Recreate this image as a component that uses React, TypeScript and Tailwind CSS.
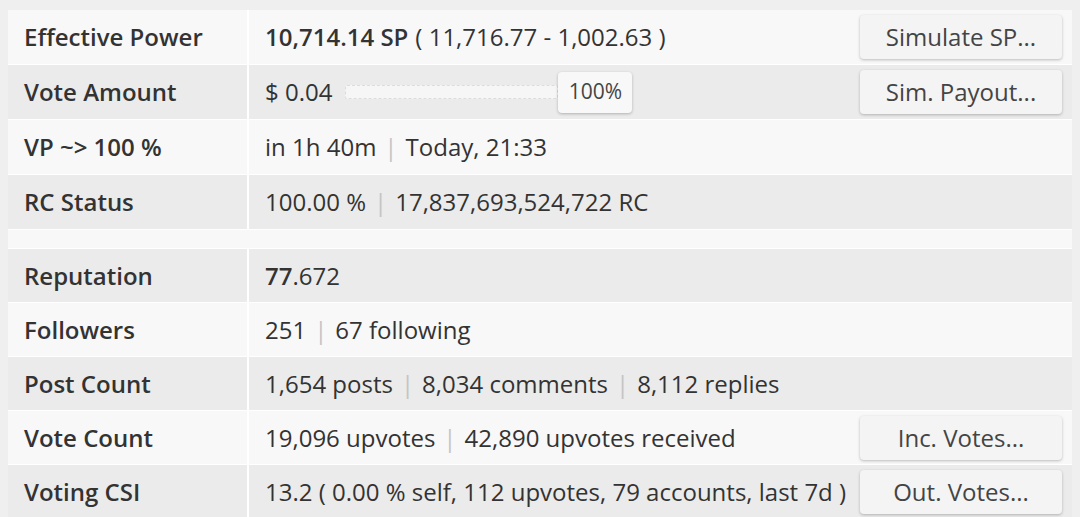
import React from "react";

const font = { fontFamily: '"Open Sans", "Noto Sans", sans-serif' };

function Sep() {
  return <span className="mx-[8px] text-[#c4c4c4]">|</span>;
}

function Btn({ children }: { children: React.ReactNode }) {
  return (
    <button className="h-[44px] w-[202px] shrink-0 rounded-[4px] bg-[#f4f4f4] text-[24px] text-[#444] shadow-[0_1px_3px_rgba(0,0,0,0.25)]">
      {children}
    </button>
  );
}

function Row({
  label,
  shade,
  tall,
  children,
  action,
}: {
  label: string;
  shade: boolean;
  tall?: boolean;
  children?: React.ReactNode;
  action?: React.ReactNode;
}) {
  const bg = shade ? "bg-[#ebebeb]" : "bg-[#f8f8f8]";
  return (
    <div className={`flex gap-[2px] ${tall ? "h-[54px]" : "h-[53px]"}`}>
      <div className={`flex w-[239px] shrink-0 items-center pl-[16px] font-semibold ${bg}`}>
        {label}
      </div>
      <div className={`flex flex-1 items-center justify-between pl-[16px] pr-[10px] ${bg}`}>
        <div className="flex items-center whitespace-nowrap">{children}</div>
        {action}
      </div>
    </div>
  );
}

export default function App() {
  return (
    <div
      className="min-h-[517px] w-[1080px] bg-[#efefef] pt-[10px] pl-[8px] pr-[8px] text-[24px] text-[#333]"
      style={font}
    >
      <div className="flex flex-col gap-[1px] bg-white">
        <Row label="Effective Power" shade={false} tall action={<Btn>Simulate SP...</Btn>}>
          <span className="font-semibold">10,714.14 SP</span>
          <span className="ml-[7px]">( 11,716.77 - 1,002.63 )</span>
        </Row>
        <Row label="Vote Amount" shade={true} tall action={<Btn>Sim. Payout...</Btn>}>
          <span>$ 0.04</span>
          <div className="ml-[13px] flex items-center">
            <div className="h-[14px] w-[213px] rounded-[2px] border border-dashed border-[#dcdcdc] bg-[#f6f6f6]" />
            <div className="flex h-[41px] w-[74px] items-center justify-center rounded-[4px] bg-[#f8f8f8] text-[21px] text-[#444] shadow-[0_1px_3px_rgba(0,0,0,0.25)]">
              100%
            </div>
          </div>
        </Row>
        <Row label="VP ~> 100 %" shade={false} tall>
          <span>in 1h 40m</span>
          <Sep />
          <span>Today, 21:33</span>
        </Row>
        <Row label="RC Status" shade={true} tall>
          <span>100.00 %</span>
          <Sep />
          <span>17,837,693,524,722 RC</span>
        </Row>
        <div className="h-[18px] bg-[#f8f8f8]" />
        <Row label="Reputation" shade={true}>
          <span className="font-semibold">77</span>
          <span>.672</span>
        </Row>
        <Row label="Followers" shade={false}>
          <span>251</span>
          <Sep />
          <span>67 following</span>
        </Row>
        <Row label="Post Count" shade={true}>
          <span>1,654 posts</span>
          <Sep />
          <span>8,034 comments</span>
          <Sep />
          <span>8,112 replies</span>
        </Row>
        <Row label="Vote Count" shade={false} action={<Btn>Inc. Votes...</Btn>}>
          <span>19,096 upvotes</span>
          <Sep />
          <span>42,890 upvotes received</span>
        </Row>
        <Row label="Voting CSI" shade={true} action={<Btn>Out. Votes...</Btn>}>
          <span>13.2 ( 0.00 % self, 112 upvotes, 79 accounts, last 7d )</span>
        </Row>
      </div>
    </div>
  );
}
